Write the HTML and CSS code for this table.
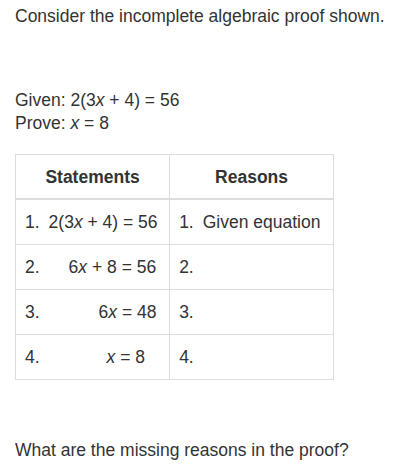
FILE: index.html
```html
<!DOCTYPE html>
<html>
<head>
<meta charset="utf-8">
<link rel="stylesheet" href="styles.css">
</head>
<body>
<div class="page">
  <p class="intro">Consider the incomplete algebraic proof shown.</p>
  <div class="given">
    <div>Given: 2(3<i>x</i> + 4) = 56</div>
    <div>Prove: <i>x</i> = 8</div>
  </div>
  <table class="proof">
    <thead>
      <tr><th class="col-s">Statements</th><th class="col-r">Reasons</th></tr>
    </thead>
    <tbody>
      <tr>
        <td><div class="st"><span class="num">1.</span><span class="eq eq1">2(3<i>x</i> + 4) = 56</span></div></td>
        <td><div class="st"><span class="num">1.</span><span class="eq eq1">Given equation</span></div></td>
      </tr>
      <tr>
        <td><div class="st"><span class="num">2.</span><span class="eq eq2">6<i>x</i> + 8 = 56</span></div></td>
        <td><div class="st"><span class="num">2.</span></div></td>
      </tr>
      <tr>
        <td><div class="st"><span class="num">3.</span><span class="eq eq3">6<i>x</i> = 48</span></div></td>
        <td><div class="st"><span class="num">3.</span></div></td>
      </tr>
      <tr>
        <td><div class="st"><span class="num">4.</span><span class="eq eq4"><i>x</i> = 8</span></div></td>
        <td><div class="st"><span class="num">4.</span></div></td>
      </tr>
    </tbody>
  </table>
  <p class="question">What are the missing reasons in the proof?</p>
</div>
</body>
</html>
```
FILE: styles.css
```css
html, body {
  margin: 0;
  padding: 0;
  background: #fff;
}
body {
  font-family: "Liberation Sans", Arial, sans-serif;
  font-size: 17.5px;
  line-height: 23px;
  color: #333;
}
.page {
  padding: 5px 15px 0 15px;
}
.intro {
  margin: 0;
}
.given {
  margin-top: 61px;
}
.proof {
  margin-top: 19px;
  border-collapse: collapse;
  width: 319px;
}
.proof th, .proof td {
  border: 1px solid #ddd;
  padding: 11px 9px;
  line-height: 22px;
  text-align: left;
  vertical-align: middle;
}
.proof thead th {
  border-bottom: 2px solid #ddd;
  text-align: center;
  font-weight: bold;
  padding: 11px 9px 10px;
}
.col-s { width: 136px; }
.col-r { width: 146px; }
.st {
  display: flex;
  white-space: nowrap;
}
.num {
  display: inline-block;
}
.eq1 { margin-left: 9px; }
.eq2 { margin-left: 29px; }
.eq3 { margin-left: 59px; }
.eq4 { margin-left: 67px; }
.question {
  margin: 59px 0 0;
}
```
